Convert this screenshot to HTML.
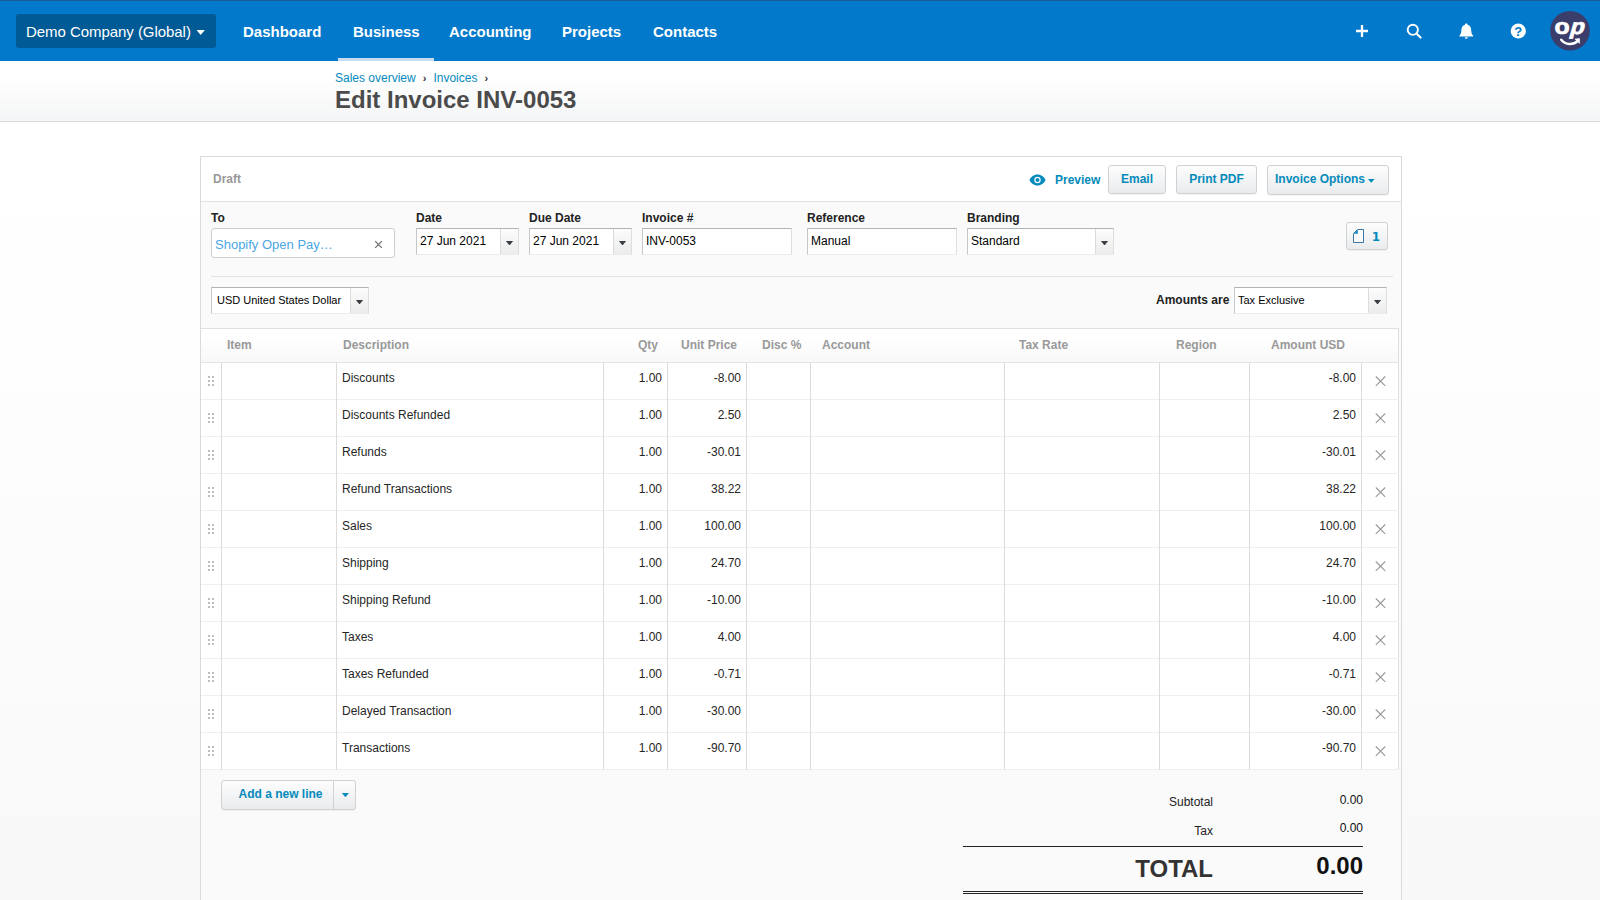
<!DOCTYPE html>
<html lang="en">
<head>
<meta charset="utf-8">
<title>Edit Invoice INV-0053</title>
<style>
*{box-sizing:border-box;margin:0;padding:0}
html,body{width:1600px;height:900px;overflow:hidden;background:#fff}
#pagebg{position:absolute;left:0;top:122px;width:1600px;height:778px;background:linear-gradient(#ffffff 0%,#fefefe 28%,#f8f8f8 100%)}
body{font-family:"Liberation Sans",Arial,Helvetica,sans-serif;font-size:12px;color:#222;position:relative}
.abs{position:absolute}
/* header */
#hdr{position:absolute;left:0;top:0;width:1600px;height:61px;background:#0279ca;box-shadow:inset 0 1px 0 #1f5a96}
#org{position:absolute;left:16px;top:14px;width:200px;height:34px;background:#005a96;border-radius:3px;color:#fff;font-size:15px;line-height:36px;padding-left:10px;white-space:nowrap;letter-spacing:-0.05px}
#org i{position:absolute;left:180.500px;top:16px;width:8.400px;height:5px;background:#fff;clip-path:polygon(0 0,100% 0,50% 100%)}
.nav{position:absolute;top:1px;height:61px;line-height:62px;color:#fff;font-weight:bold;font-size:15px;white-space:nowrap}
#navsel{position:absolute;left:338px;top:58px;width:96px;height:3px;background:#c6dcf0}
.ico{position:absolute}
/* subheader */
#sub{position:absolute;left:0;top:61px;width:1600px;height:61px;background:linear-gradient(#ffffff 0%,#ffffff 25%,#f4f5f6 100%);border-bottom:1px solid #d9dadb}
#crumb{position:absolute;left:335px;top:71px;font-size:12px;line-height:14px;color:#058abd;white-space:nowrap}
#crumb span{color:#333;margin:0 7px 0 7px;font-size:11px;font-weight:bold}
#title{position:absolute;left:335px;top:85px;font-size:24px;line-height:30px;font-weight:bold;color:#4b4b4b;white-space:nowrap}
/* panel */
#panel{position:absolute;left:200px;top:156px;width:1202px;height:760px;border:1px solid #d9dadb;background:#fafafa}
#phead{position:absolute;left:0;top:0;width:1200px;height:45px;background:#fff;border-bottom:1px solid #e2e3e4}
.lbl{position:absolute;font-weight:bold;font-size:12px;line-height:14px;color:#222;white-space:nowrap}
.inp{position:absolute;height:27px;background:#fff;border:1px solid #c6c7c8;border-top-color:#b2b3b4;border-bottom-color:#ececec;border-right-color:#dedede;font-size:12px;line-height:24px;padding-left:3px;color:#000;white-space:nowrap;overflow:hidden}
.trg{position:absolute;right:0;top:0;width:18px;height:25px;border-left:1px solid #dcdcdc;background:linear-gradient(#fcfcfc,#ececec)}
.trg:after{content:"";position:absolute;left:4.700px;top:11.700px;width:7.600px;height:4.800px;background:#3a3f45;clip-path:polygon(0 0,100% 0,50% 100%)}
.btn{position:absolute;height:30px;border:1px solid #cfd1d3;border-radius:3px;background:linear-gradient(#fdfdfd,#e9ebed);color:#048abb;font-weight:bold;font-size:12px;line-height:26px;text-align:center;white-space:nowrap;box-shadow:0 1px 0 rgba(0,0,0,.04)}
.hr{position:absolute;height:1px;background:#e1e2e3}
/* table */
#tbl{position:absolute;left:0;top:171px;width:1198px;height:442px;background:#fff;border:1px solid #dfe0e1;border-left:none;border-bottom-color:#ececec}
#thead{position:absolute;left:0;top:0;width:1197px;height:34px;background:linear-gradient(#ffffff 20%,#f8f8f8);border-bottom:1px solid #e5e5e5}
.th{position:absolute;top:0;line-height:33px;font-weight:bold;font-size:12px;color:#999;white-space:nowrap}
.row{position:absolute;left:0;width:1198px;height:37px;border-bottom:1px solid #efefef}
.row b{position:absolute;top:0;height:37px;border-left:1px solid #dcdcdc;font-weight:normal}
.row span{position:absolute;top:8px;line-height:14px;font-size:12px;color:#262626;white-space:nowrap}
.row .r{text-align:right}
.grip{position:absolute;left:7px;top:13px;width:7px;height:11px}
.del{position:absolute;left:1173.500px;top:13px;width:11px;height:11px}
</style>
</head>
<body>
<div id="hdr">
  <div id="org">Demo Company (Global)<i></i></div>
  <div class="nav" style="left:243px">Dashboard</div>
  <div class="nav" style="left:353px">Business</div>
  <div class="nav" style="left:449px">Accounting</div>
  <div class="nav" style="left:562px">Projects</div>
  <div class="nav" style="left:653px">Contacts</div>
  <div id="navsel"></div>
  <svg class="ico" style="left:1340px;top:10px" width="260" height="45" viewBox="1340 10 260 45">
    <path d="M1362 25v12M1356 31h12" stroke="#fff" stroke-width="2.300" fill="none"/>
    <circle cx="1412.800" cy="29.800" r="5.100" stroke="#fff" stroke-width="1.900" fill="none"/>
    <path d="M1416.700 33.700l3.900 3.900" stroke="#fff" stroke-width="2.100" stroke-linecap="round" fill="none"/>
    <path d="M1466.300 23.600c-0.800 0-1.300 0.500-1.300 1.200c-2.400 0.700-3.600 2.700-3.600 5.300c0 3.200-0.800 4.400-2 5.600v0.800h13.800v-0.800c-1.200-1.200-2-2.400-2-5.600c0-2.600-1.200-4.600-3.600-5.300c0-0.700-0.500-1.200-1.300-1.200zM1464.800 37.300a1.500 1.500 0 0 0 3 0z" fill="#fff"/>
    <circle cx="1518.300" cy="31" r="7.600" fill="#fff"/>
    <text x="1518.300" y="35.700" text-anchor="middle" font-family="Liberation Sans,Arial,sans-serif" font-weight="bold" font-size="13" fill="#0078c8">?</text>
    <circle cx="1570" cy="30.700" r="19.800" fill="#3b3d6b"/>
    <text x="0" y="0" font-family="Liberation Sans,Arial,sans-serif" font-weight="bold" font-size="22" fill="#fff" stroke="#fff" stroke-width="0.700" stroke-linejoin="round" transform="translate(1554.400 34.200) scale(1.130 1)">o</text>
    <text x="0" y="0" font-family="Liberation Sans,Arial,sans-serif" font-weight="bold" font-size="22" fill="#fff" stroke="#fff" stroke-width="0.700" stroke-linejoin="round" transform="translate(1568.900 34.200) skewX(-16) scale(1.060 1)">p</text>
    <path d="M1561.200 39.800c4.200 5.300 11.800 5.500 16.600 1.200" stroke="#fff" stroke-width="2.400" fill="none" stroke-linecap="round"/>
    <path d="M1574.900 39l4.700-0.500l0 4.900z" fill="#fff" stroke="#fff" stroke-width="0.500" stroke-linejoin="round"/>
  </svg>
</div>
<div id="sub"></div>
<div id="crumb">Sales overview<span>›</span>Invoices<span>›</span></div>
<div id="title">Edit Invoice INV-0053</div>

<div id="pagebg"></div>
<div id="panel">
  <div id="phead"></div>
  <div class="lbl" style="left:12px;top:15px;color:#999">Draft</div>
  <svg class="abs" style="left:827.700px;top:16.500px" width="17" height="12" viewBox="0 0 17 12"><path d="M8.500 0.500C4.800 0.500 1.800 2.900 0.500 6c1.300 3.100 4.300 5.500 8 5.500s6.700-2.400 8-5.500C15.200 2.900 12.200 0.500 8.500 0.500z" fill="#048abb"/><circle cx="8.500" cy="6" r="3.200" fill="#fff"/><circle cx="8.500" cy="6" r="2" fill="#048abb"/></svg>
  <div class="lbl" style="left:854px;top:16px;color:#048abb">Preview</div>
  <div class="btn" style="left:907px;top:8px;width:58px;height:29px">Email</div>
  <div class="btn" style="left:975px;top:8px;width:81px;height:29px">Print PDF</div>
  <div class="btn" style="left:1066px;top:8px;width:122px;text-align:left;padding-left:7px">Invoice Options<i style="position:absolute;left:99.500px;top:12.500px;width:7.500px;height:4.200px;background:#048abb;clip-path:polygon(0 0,100% 0,50% 100%)"></i></div>

  <div class="lbl" style="left:10px;top:54px">To</div>
  <div class="abs" style="left:10px;top:71px;width:184px;height:30px;background:#fff;border:1px solid #ccced0;border-radius:3px;font-size:13px;line-height:31px;padding-left:3px;color:#4ba6e4;white-space:nowrap">Shopify Open Pay…
    <svg class="abs" style="left:162px;top:10.500px" width="9" height="9" viewBox="0 0 9 9"><path d="M1.200 1.200l6.600 6.600M7.800 1.200l-6.600 6.600" stroke="#6c6c6c" stroke-width="1.200" fill="none"/></svg>
  </div>
  <div class="lbl" style="left:215px;top:54px">Date</div>
  <div class="inp" style="left:215px;top:71px;width:103px">27 Jun 2021<div class="trg"></div></div>
  <div class="lbl" style="left:328px;top:54px">Due Date</div>
  <div class="inp" style="left:328px;top:71px;width:103px">27 Jun 2021<div class="trg"></div></div>
  <div class="lbl" style="left:441px;top:54px">Invoice #</div>
  <div class="inp" style="left:441px;top:71px;width:150px">INV-0053</div>
  <div class="lbl" style="left:606px;top:54px">Reference</div>
  <div class="inp" style="left:606px;top:71px;width:150px">Manual</div>
  <div class="lbl" style="left:766px;top:54px">Branding</div>
  <div class="inp" style="left:766px;top:71px;width:147px">Standard<div class="trg"></div></div>
  <div class="btn" style="left:1145px;top:65px;width:42px;height:28px;line-height:28px;text-align:left;padding-left:24.700px;font-family:'DejaVu Sans','Liberation Sans',sans-serif;font-size:12px">1
    <svg class="abs" style="left:5px;top:5px" width="13" height="16" viewBox="0 0 13 16"><path d="M5.500 1.500H11.500V14.500H1.500V5.500z" fill="#fbfbfb" stroke="#3a76a6" stroke-width="1" stroke-linejoin="miter"/><path d="M1.800 5.800L5.800 1.800V5.800z" fill="#0a86c4"/></svg>
  </div>
  <div class="hr" style="left:10px;top:119px;width:1182px"></div>

  <div class="inp" style="left:10px;top:130px;width:158px;font-size:11px;padding-left:5px">USD United States Dollar<div class="trg"></div></div>
  <div class="lbl" style="left:955px;top:136px">Amounts are</div>
  <div class="inp" style="left:1033px;top:130px;width:153px;font-size:11px">Tax Exclusive<div class="trg"></div></div>

  <div id="tbl">
    <div id="thead">
      <div class="th" style="left:26px">Item</div>
      <div class="th" style="left:142px">Description</div>
      <div class="th" style="left:437px">Qty</div>
      <div class="th" style="left:480px">Unit Price</div>
      <div class="th" style="left:561px">Disc %</div>
      <div class="th" style="left:621px">Account</div>
      <div class="th" style="left:818px">Tax Rate</div>
      <div class="th" style="left:975px">Region</div>
      <div class="th" style="left:1070px">Amount USD</div>
    </div>
    <div class="row" style="top:34px"><svg class="grip" viewBox="0 0 7 11"><g fill="#bdbdbd"><rect x="0" y="0" width="2" height="2"/><rect x="4" y="0" width="2" height="2"/><rect x="0" y="4" width="2" height="2"/><rect x="4" y="4" width="2" height="2"/><rect x="0" y="8" width="2" height="2"/><rect x="4" y="8" width="2" height="2"/></g></svg><b style="left:20px"></b><b style="left:135px"></b><b style="left:402px"></b><b style="left:466px"></b><b style="left:545px"></b><b style="left:609px"></b><b style="left:803px"></b><b style="left:958px"></b><b style="left:1048px"></b><b style="left:1160px"></b><span style="left:141px">Discounts</span><span class="r" style="left:402px;width:59px">1.00</span><span class="r" style="left:466px;width:74px">-8.00</span><span class="r" style="left:1048px;width:107px">-8.00</span><svg class="del" viewBox="0 0 11 11"><path d="M0.800 0.500l9.400 9.400M10.200 0.500l-9.400 9.400" stroke="#999" stroke-width="1.100" fill="none"/></svg></div>
    <div class="row" style="top:71px"><svg class="grip" viewBox="0 0 7 11"><g fill="#bdbdbd"><rect x="0" y="0" width="2" height="2"/><rect x="4" y="0" width="2" height="2"/><rect x="0" y="4" width="2" height="2"/><rect x="4" y="4" width="2" height="2"/><rect x="0" y="8" width="2" height="2"/><rect x="4" y="8" width="2" height="2"/></g></svg><b style="left:20px"></b><b style="left:135px"></b><b style="left:402px"></b><b style="left:466px"></b><b style="left:545px"></b><b style="left:609px"></b><b style="left:803px"></b><b style="left:958px"></b><b style="left:1048px"></b><b style="left:1160px"></b><span style="left:141px">Discounts Refunded</span><span class="r" style="left:402px;width:59px">1.00</span><span class="r" style="left:466px;width:74px">2.50</span><span class="r" style="left:1048px;width:107px">2.50</span><svg class="del" viewBox="0 0 11 11"><path d="M0.800 0.500l9.400 9.400M10.200 0.500l-9.400 9.400" stroke="#999" stroke-width="1.100" fill="none"/></svg></div>
    <div class="row" style="top:108px"><svg class="grip" viewBox="0 0 7 11"><g fill="#bdbdbd"><rect x="0" y="0" width="2" height="2"/><rect x="4" y="0" width="2" height="2"/><rect x="0" y="4" width="2" height="2"/><rect x="4" y="4" width="2" height="2"/><rect x="0" y="8" width="2" height="2"/><rect x="4" y="8" width="2" height="2"/></g></svg><b style="left:20px"></b><b style="left:135px"></b><b style="left:402px"></b><b style="left:466px"></b><b style="left:545px"></b><b style="left:609px"></b><b style="left:803px"></b><b style="left:958px"></b><b style="left:1048px"></b><b style="left:1160px"></b><span style="left:141px">Refunds</span><span class="r" style="left:402px;width:59px">1.00</span><span class="r" style="left:466px;width:74px">-30.01</span><span class="r" style="left:1048px;width:107px">-30.01</span><svg class="del" viewBox="0 0 11 11"><path d="M0.800 0.500l9.400 9.400M10.200 0.500l-9.400 9.400" stroke="#999" stroke-width="1.100" fill="none"/></svg></div>
    <div class="row" style="top:145px"><svg class="grip" viewBox="0 0 7 11"><g fill="#bdbdbd"><rect x="0" y="0" width="2" height="2"/><rect x="4" y="0" width="2" height="2"/><rect x="0" y="4" width="2" height="2"/><rect x="4" y="4" width="2" height="2"/><rect x="0" y="8" width="2" height="2"/><rect x="4" y="8" width="2" height="2"/></g></svg><b style="left:20px"></b><b style="left:135px"></b><b style="left:402px"></b><b style="left:466px"></b><b style="left:545px"></b><b style="left:609px"></b><b style="left:803px"></b><b style="left:958px"></b><b style="left:1048px"></b><b style="left:1160px"></b><span style="left:141px">Refund Transactions</span><span class="r" style="left:402px;width:59px">1.00</span><span class="r" style="left:466px;width:74px">38.22</span><span class="r" style="left:1048px;width:107px">38.22</span><svg class="del" viewBox="0 0 11 11"><path d="M0.800 0.500l9.400 9.400M10.200 0.500l-9.400 9.400" stroke="#999" stroke-width="1.100" fill="none"/></svg></div>
    <div class="row" style="top:182px"><svg class="grip" viewBox="0 0 7 11"><g fill="#bdbdbd"><rect x="0" y="0" width="2" height="2"/><rect x="4" y="0" width="2" height="2"/><rect x="0" y="4" width="2" height="2"/><rect x="4" y="4" width="2" height="2"/><rect x="0" y="8" width="2" height="2"/><rect x="4" y="8" width="2" height="2"/></g></svg><b style="left:20px"></b><b style="left:135px"></b><b style="left:402px"></b><b style="left:466px"></b><b style="left:545px"></b><b style="left:609px"></b><b style="left:803px"></b><b style="left:958px"></b><b style="left:1048px"></b><b style="left:1160px"></b><span style="left:141px">Sales</span><span class="r" style="left:402px;width:59px">1.00</span><span class="r" style="left:466px;width:74px">100.00</span><span class="r" style="left:1048px;width:107px">100.00</span><svg class="del" viewBox="0 0 11 11"><path d="M0.800 0.500l9.400 9.400M10.200 0.500l-9.400 9.400" stroke="#999" stroke-width="1.100" fill="none"/></svg></div>
    <div class="row" style="top:219px"><svg class="grip" viewBox="0 0 7 11"><g fill="#bdbdbd"><rect x="0" y="0" width="2" height="2"/><rect x="4" y="0" width="2" height="2"/><rect x="0" y="4" width="2" height="2"/><rect x="4" y="4" width="2" height="2"/><rect x="0" y="8" width="2" height="2"/><rect x="4" y="8" width="2" height="2"/></g></svg><b style="left:20px"></b><b style="left:135px"></b><b style="left:402px"></b><b style="left:466px"></b><b style="left:545px"></b><b style="left:609px"></b><b style="left:803px"></b><b style="left:958px"></b><b style="left:1048px"></b><b style="left:1160px"></b><span style="left:141px">Shipping</span><span class="r" style="left:402px;width:59px">1.00</span><span class="r" style="left:466px;width:74px">24.70</span><span class="r" style="left:1048px;width:107px">24.70</span><svg class="del" viewBox="0 0 11 11"><path d="M0.800 0.500l9.400 9.400M10.200 0.500l-9.400 9.400" stroke="#999" stroke-width="1.100" fill="none"/></svg></div>
    <div class="row" style="top:256px"><svg class="grip" viewBox="0 0 7 11"><g fill="#bdbdbd"><rect x="0" y="0" width="2" height="2"/><rect x="4" y="0" width="2" height="2"/><rect x="0" y="4" width="2" height="2"/><rect x="4" y="4" width="2" height="2"/><rect x="0" y="8" width="2" height="2"/><rect x="4" y="8" width="2" height="2"/></g></svg><b style="left:20px"></b><b style="left:135px"></b><b style="left:402px"></b><b style="left:466px"></b><b style="left:545px"></b><b style="left:609px"></b><b style="left:803px"></b><b style="left:958px"></b><b style="left:1048px"></b><b style="left:1160px"></b><span style="left:141px">Shipping Refund</span><span class="r" style="left:402px;width:59px">1.00</span><span class="r" style="left:466px;width:74px">-10.00</span><span class="r" style="left:1048px;width:107px">-10.00</span><svg class="del" viewBox="0 0 11 11"><path d="M0.800 0.500l9.400 9.400M10.200 0.500l-9.400 9.400" stroke="#999" stroke-width="1.100" fill="none"/></svg></div>
    <div class="row" style="top:293px"><svg class="grip" viewBox="0 0 7 11"><g fill="#bdbdbd"><rect x="0" y="0" width="2" height="2"/><rect x="4" y="0" width="2" height="2"/><rect x="0" y="4" width="2" height="2"/><rect x="4" y="4" width="2" height="2"/><rect x="0" y="8" width="2" height="2"/><rect x="4" y="8" width="2" height="2"/></g></svg><b style="left:20px"></b><b style="left:135px"></b><b style="left:402px"></b><b style="left:466px"></b><b style="left:545px"></b><b style="left:609px"></b><b style="left:803px"></b><b style="left:958px"></b><b style="left:1048px"></b><b style="left:1160px"></b><span style="left:141px">Taxes</span><span class="r" style="left:402px;width:59px">1.00</span><span class="r" style="left:466px;width:74px">4.00</span><span class="r" style="left:1048px;width:107px">4.00</span><svg class="del" viewBox="0 0 11 11"><path d="M0.800 0.500l9.400 9.400M10.200 0.500l-9.400 9.400" stroke="#999" stroke-width="1.100" fill="none"/></svg></div>
    <div class="row" style="top:330px"><svg class="grip" viewBox="0 0 7 11"><g fill="#bdbdbd"><rect x="0" y="0" width="2" height="2"/><rect x="4" y="0" width="2" height="2"/><rect x="0" y="4" width="2" height="2"/><rect x="4" y="4" width="2" height="2"/><rect x="0" y="8" width="2" height="2"/><rect x="4" y="8" width="2" height="2"/></g></svg><b style="left:20px"></b><b style="left:135px"></b><b style="left:402px"></b><b style="left:466px"></b><b style="left:545px"></b><b style="left:609px"></b><b style="left:803px"></b><b style="left:958px"></b><b style="left:1048px"></b><b style="left:1160px"></b><span style="left:141px">Taxes Refunded</span><span class="r" style="left:402px;width:59px">1.00</span><span class="r" style="left:466px;width:74px">-0.71</span><span class="r" style="left:1048px;width:107px">-0.71</span><svg class="del" viewBox="0 0 11 11"><path d="M0.800 0.500l9.400 9.400M10.200 0.500l-9.400 9.400" stroke="#999" stroke-width="1.100" fill="none"/></svg></div>
    <div class="row" style="top:367px"><svg class="grip" viewBox="0 0 7 11"><g fill="#bdbdbd"><rect x="0" y="0" width="2" height="2"/><rect x="4" y="0" width="2" height="2"/><rect x="0" y="4" width="2" height="2"/><rect x="4" y="4" width="2" height="2"/><rect x="0" y="8" width="2" height="2"/><rect x="4" y="8" width="2" height="2"/></g></svg><b style="left:20px"></b><b style="left:135px"></b><b style="left:402px"></b><b style="left:466px"></b><b style="left:545px"></b><b style="left:609px"></b><b style="left:803px"></b><b style="left:958px"></b><b style="left:1048px"></b><b style="left:1160px"></b><span style="left:141px">Delayed Transaction</span><span class="r" style="left:402px;width:59px">1.00</span><span class="r" style="left:466px;width:74px">-30.00</span><span class="r" style="left:1048px;width:107px">-30.00</span><svg class="del" viewBox="0 0 11 11"><path d="M0.800 0.500l9.400 9.400M10.200 0.500l-9.400 9.400" stroke="#999" stroke-width="1.100" fill="none"/></svg></div>
    <div class="row" style="top:404px"><svg class="grip" viewBox="0 0 7 11"><g fill="#bdbdbd"><rect x="0" y="0" width="2" height="2"/><rect x="4" y="0" width="2" height="2"/><rect x="0" y="4" width="2" height="2"/><rect x="4" y="4" width="2" height="2"/><rect x="0" y="8" width="2" height="2"/><rect x="4" y="8" width="2" height="2"/></g></svg><b style="left:20px"></b><b style="left:135px"></b><b style="left:402px"></b><b style="left:466px"></b><b style="left:545px"></b><b style="left:609px"></b><b style="left:803px"></b><b style="left:958px"></b><b style="left:1048px"></b><b style="left:1160px"></b><span style="left:141px">Transactions</span><span class="r" style="left:402px;width:59px">1.00</span><span class="r" style="left:466px;width:74px">-90.70</span><span class="r" style="left:1048px;width:107px">-90.70</span><svg class="del" viewBox="0 0 11 11"><path d="M0.800 0.500l9.400 9.400M10.200 0.500l-9.400 9.400" stroke="#999" stroke-width="1.100" fill="none"/></svg></div>
  </div>

  <div class="btn" style="left:20px;top:623px;width:113px;height:30px;line-height:27px;border-radius:3px 0 0 3px;padding-left:6px">Add a new line</div>
  <div class="btn" style="left:132px;top:623px;width:23px;height:30px;border-radius:0 3px 3px 0"><i style="position:absolute;left:7.700px;top:11.800px;width:7.400px;height:4.400px;background:#048abb;clip-path:polygon(0 0,100% 0,50% 100%)"></i></div>

  <div class="abs" style="left:862px;top:638px;width:150px;text-align:right;font-size:12px;line-height:14px;color:#222">Subtotal</div>
  <div class="abs" style="left:1062px;top:636px;width:100px;text-align:right;font-size:12px;line-height:14px;color:#111">0.00</div>
  <div class="abs" style="left:862px;top:667px;width:150px;text-align:right;font-size:12px;line-height:14px;color:#222">Tax</div>
  <div class="abs" style="left:1062px;top:664px;width:100px;text-align:right;font-size:12px;line-height:14px;color:#111">0.00</div>
  <div class="abs" style="left:762px;top:689px;width:400px;height:1px;background:#222"></div>
  <div class="abs" style="left:812px;top:697px;width:200px;text-align:right;font-size:24px;line-height:30px;font-weight:bold;color:#333">TOTAL</div>
  <div class="abs" style="left:1012px;top:694px;width:150px;text-align:right;font-size:24px;line-height:30px;font-weight:bold;color:#111">0.00</div>
  <div class="abs" style="left:762px;top:734px;width:400px;height:3px;border-top:1px solid #222;border-bottom:1px solid #222"></div>
</div>
</body>
</html>
